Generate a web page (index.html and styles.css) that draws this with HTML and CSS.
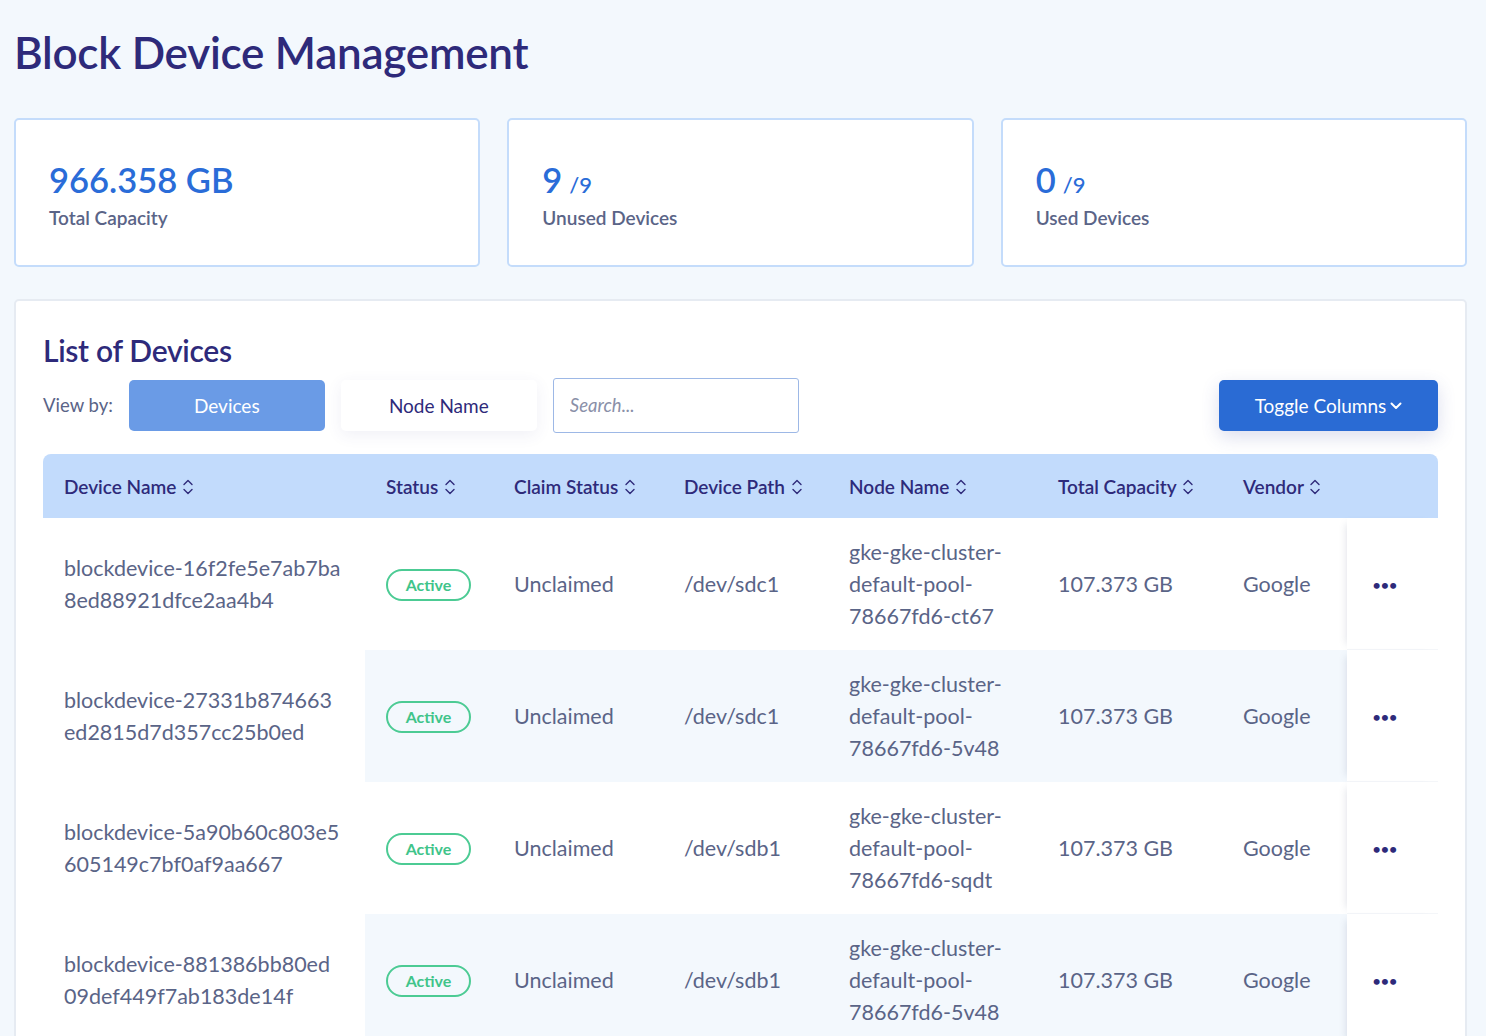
FILE: index.html
```html
<!DOCTYPE html>
<html lang="en">
<head>
<meta charset="utf-8">
<title>Block Device Management</title>
<link rel="stylesheet" href="styles.css">
</head>
<body>
<div class="page">
  <h1 class="page-title">Block Device Management</h1>

  <div class="stats">
    <div class="stat-card">
      <div class="stat-value">966.358 GB</div>
      <div class="stat-label">Total Capacity</div>
    </div>
    <div class="stat-card">
      <div class="stat-value">9<span class="stat-total">/9</span></div>
      <div class="stat-label">Unused Devices</div>
    </div>
    <div class="stat-card">
      <div class="stat-value">0<span class="stat-total">/9</span></div>
      <div class="stat-label">Used Devices</div>
    </div>
  </div>

  <div class="list-card">
    <h2 class="list-title">List of Devices</h2>
    <div class="toolbar">
      <span class="view-label">View by:</span>
      <button class="view-btn active">Devices</button>
      <button class="view-btn">Node Name</button>
      <input class="search" type="text" placeholder="Search...">
      <div class="spacer"></div>
      <button class="toggle-btn">Toggle Columns
        <svg class="chev" width="12" height="8" viewBox="0 0 12 8"><path d="M1.5 1.5 L6 6 L10.5 1.5" fill="none" stroke="#fff" stroke-width="2" stroke-linecap="round" stroke-linejoin="round"/></svg>
      </button>
    </div>

    <table class="devices">
      <colgroup>
        <col class="c-name"><col class="c-status"><col class="c-claim"><col class="c-path"><col class="c-node"><col class="c-cap"><col class="c-vendor"><col class="c-act">
      </colgroup>
      <thead>
        <tr>
          <th>Device Name <svg class="sort" width="12" height="20" viewBox="0 0 12 20"><path d="M2 7.5 L6 3.5 L10 7.5 M2 12.5 L6 16.5 L10 12.5" fill="none" stroke="#2e2a7a" stroke-width="1.4" stroke-linecap="round" stroke-linejoin="round"/></svg></th>
          <th>Status <svg class="sort" width="12" height="20" viewBox="0 0 12 20"><path d="M2 7.5 L6 3.5 L10 7.5 M2 12.5 L6 16.5 L10 12.5" fill="none" stroke="#2e2a7a" stroke-width="1.4" stroke-linecap="round" stroke-linejoin="round"/></svg></th>
          <th>Claim Status <svg class="sort" width="12" height="20" viewBox="0 0 12 20"><path d="M2 7.5 L6 3.5 L10 7.5 M2 12.5 L6 16.5 L10 12.5" fill="none" stroke="#2e2a7a" stroke-width="1.4" stroke-linecap="round" stroke-linejoin="round"/></svg></th>
          <th>Device Path <svg class="sort" width="12" height="20" viewBox="0 0 12 20"><path d="M2 7.5 L6 3.5 L10 7.5 M2 12.5 L6 16.5 L10 12.5" fill="none" stroke="#2e2a7a" stroke-width="1.4" stroke-linecap="round" stroke-linejoin="round"/></svg></th>
          <th>Node Name <svg class="sort" width="12" height="20" viewBox="0 0 12 20"><path d="M2 7.5 L6 3.5 L10 7.5 M2 12.5 L6 16.5 L10 12.5" fill="none" stroke="#2e2a7a" stroke-width="1.4" stroke-linecap="round" stroke-linejoin="round"/></svg></th>
          <th>Total Capacity <svg class="sort" width="12" height="20" viewBox="0 0 12 20"><path d="M2 7.5 L6 3.5 L10 7.5 M2 12.5 L6 16.5 L10 12.5" fill="none" stroke="#2e2a7a" stroke-width="1.4" stroke-linecap="round" stroke-linejoin="round"/></svg></th>
          <th>Vendor <svg class="sort" width="12" height="20" viewBox="0 0 12 20"><path d="M2 7.5 L6 3.5 L10 7.5 M2 12.5 L6 16.5 L10 12.5" fill="none" stroke="#2e2a7a" stroke-width="1.4" stroke-linecap="round" stroke-linejoin="round"/></svg></th>
          <th class="th-act"></th>
        </tr>
      </thead>
      <tbody>
        <tr>
          <td class="name">blockdevice-16f2fe5e7ab7ba<wbr>8ed88921dfce2aa4b4</td>
          <td><span class="badge">Active</span></td>
          <td>Unclaimed</td>
          <td>/dev/sdc1</td>
          <td class="node">gke-gke-cluster-default-pool-78667fd6-ct67</td>
          <td>107.373 GB</td>
          <td>Google</td>
          <td class="act"><span class="dots">•••</span></td>
        </tr>
        <tr>
          <td class="name">blockdevice-27331b874663<wbr>ed2815d7d357cc25b0ed</td>
          <td><span class="badge">Active</span></td>
          <td>Unclaimed</td>
          <td>/dev/sdc1</td>
          <td class="node">gke-gke-cluster-default-pool-78667fd6-5v48</td>
          <td>107.373 GB</td>
          <td>Google</td>
          <td class="act"><span class="dots">•••</span></td>
        </tr>
        <tr>
          <td class="name">blockdevice-5a90b60c803e5<wbr>605149c7bf0af9aa667</td>
          <td><span class="badge">Active</span></td>
          <td>Unclaimed</td>
          <td>/dev/sdb1</td>
          <td class="node">gke-gke-cluster-default-pool-78667fd6-sqdt</td>
          <td>107.373 GB</td>
          <td>Google</td>
          <td class="act"><span class="dots">•••</span></td>
        </tr>
        <tr>
          <td class="name">blockdevice-881386bb80ed<wbr>09def449f7ab183de14f</td>
          <td><span class="badge">Active</span></td>
          <td>Unclaimed</td>
          <td>/dev/sdb1</td>
          <td class="node">gke-gke-cluster-default-pool-78667fd6-5v48</td>
          <td>107.373 GB</td>
          <td>Google</td>
          <td class="act"><span class="dots">•••</span></td>
        </tr>
        <tr>
          <td class="name">blockdevice-9c2e71a04b5f3<wbr>d8e6a1b27c90f44e1a2</td>
          <td><span class="badge">Active</span></td>
          <td>Unclaimed</td>
          <td>/dev/sdc1</td>
          <td class="node">gke-gke-cluster-default-pool-78667fd6-sqdt</td>
          <td>107.373 GB</td>
          <td>Google</td>
          <td class="act"><span class="dots">•••</span></td>
        </tr>
      </tbody>
    </table>
  </div>
</div>
</body>
</html>
```

FILE: styles.css
```css
* { box-sizing: border-box; }
html, body {
  margin: 0;
  padding: 0;
  background: #f3f8fd;
  font-family: Lato, "Noto Sans", "Liberation Sans", sans-serif;
  color: #5a6487;
}
.page {
  padding: 0 19px 40px 14px;
}
.page-title {
  margin: 0;
  padding-top: 26px;
  font-size: 44px;
  line-height: 52px;
  font-weight: 600;
  color: #2e2a7a;
  letter-spacing: -0.25px;
}
.stats {
  display: grid;
  grid-template-columns: 1fr 1fr 1fr;
  gap: 27px;
  margin-top: 40px;
}
.stat-card {
  background: #fff;
  border: 2px solid #c4dcfb;
  border-radius: 5px;
  height: 149px;
  padding: 39px 33px 0;
}
.stat-value {
  font-size: 34.5px;
  line-height: 42px;
  font-weight: 600;
  color: #2a6cd8;
}
.stat-total {
  font-size: 22px;
  font-weight: 500;
  line-height: 1;
  margin-left: 7px;
}
.stat-label {
  margin-top: 5px;
  font-size: 19px;
  line-height: 23px;
  font-weight: 600;
  color: #5a6487;
}
.list-card {
  margin-top: 32px;
  background: #fff;
  border: 2px solid #e6ebf2;
  border-radius: 5px;
  padding: 29px 27px 0;
}
.list-title {
  margin: 0;
  font-size: 30px;
  line-height: 40px;
  font-weight: 600;
  color: #2e2a7a;
  letter-spacing: -0.3px;
}
.toolbar {
  display: flex;
  align-items: center;
  margin-top: 7px;
  height: 56px;
}
.view-label {
  font-size: 18.5px;
  color: #5a6487;
  margin-right: 16px;
}
.view-btn {
  width: 196px;
  height: 51px;
  border: 0;
  border-radius: 5px;
  background: #fff;
  font-family: inherit;
  font-size: 19px;
  color: #2e2a7a;
  margin-right: 16px;
  box-shadow: 0 4px 16px rgba(60, 70, 140, 0.08);
  cursor: pointer;
}
.view-btn.active {
  background: #6a9be6;
  color: #fff;
  box-shadow: none;
}
.search {
  width: 246px;
  height: 55px;
  border: 1px solid #9db8e6;
  border-radius: 3px;
  padding: 0 16px;
  font-family: inherit;
  font-size: 18.5px;
  color: #5a6487;
  outline: none;
}
.search::placeholder {
  font-style: italic;
  color: #8a90a8;
}
.spacer { flex: 1; }
.toggle-btn {
  width: 219px;
  height: 51px;
  border: 0;
  border-radius: 5px;
  background: #2a6bd4;
  color: #fff;
  font-family: inherit;
  font-size: 19px;
  display: flex;
  align-items: center;
  justify-content: center;
  gap: 4px;
  box-shadow: 0 6px 18px rgba(60, 70, 160, 0.18);
  cursor: pointer;
}
.chev { margin-top: 1px; }

.devices {
  margin-top: 21px;
  width: 100%;
  border-collapse: collapse;
  table-layout: fixed;
}
.c-name { width: 322px; }
.c-status { width: 128px; }
.c-claim { width: 170px; }
.c-path { width: 165px; }
.c-node { width: 209px; }
.c-cap { width: 185px; }
.c-vendor { width: 125px; }
.c-act { width: 91px; }

.devices th {
  background: #c2dbfc;
  height: 64px;
  padding: 0 0 0 21px;
  text-align: left;
  font-size: 19px;
  font-weight: 600;
  color: #2e2a7a;
  white-space: nowrap;
}
.devices th:first-child { border-top-left-radius: 8px; }
.devices th:last-child { border-top-right-radius: 8px; }
.sort {
  vertical-align: middle;
  margin-left: 1px;
  margin-top: -3px;
}
.devices td {
  height: 132px;
  padding: 0 10px 0 21px;
  font-size: 21.5px;
  line-height: 32px;
  color: #5a6487;
  vertical-align: middle;
}
.devices td.name {
  padding-right: 8px;
}
.devices tbody tr:nth-child(even) td {
  background: #f3f8fd;
}
.devices tbody tr:nth-child(even) td.name {
  background: #fff;
}
.devices td.act {
  background: #fff !important;
  box-shadow: -6px 0 8px -6px rgba(60, 70, 110, 0.18), inset 0 -1px 0 #f4f6f9;
  padding-left: 25px;
}
.badge {
  display: inline-block;
  width: 85px;
  height: 32px;
  border: 2px solid #4ccb94;
  border-radius: 16px;
  text-align: center;
  font-size: 16px;
  line-height: 28px;
  font-weight: 700;
  color: #3fc48a;
}
.dots {
  font-size: 16px;
  color: #2e2a7a;
  letter-spacing: -1px;
}
```
